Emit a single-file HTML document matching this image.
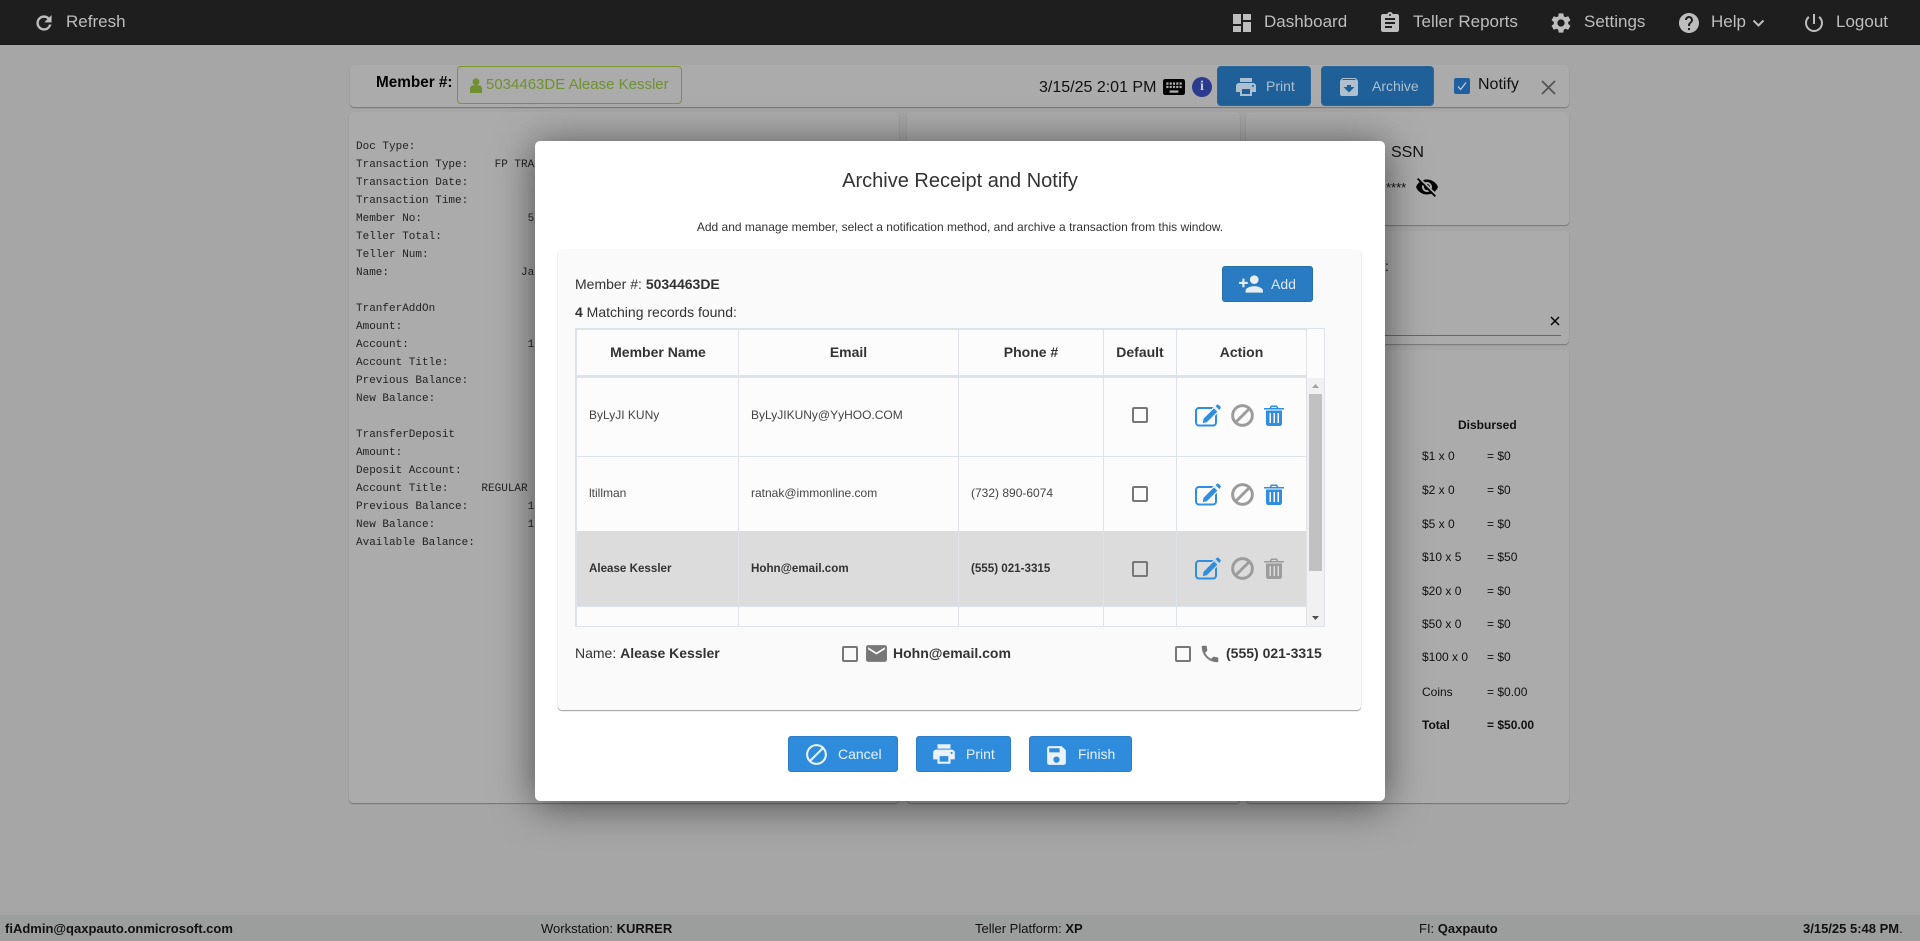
<!DOCTYPE html>
<html>
<head>
<meta charset="utf-8">
<title>Archive Receipt and Notify</title>
<style>
*{box-sizing:border-box}
html,body{margin:0;padding:0;width:1920px;height:941px;overflow:hidden;background:#a6a6a6;font-family:"Liberation Sans",sans-serif;color:#222}
.a{position:absolute}
.t{position:absolute;line-height:20px;height:20px;white-space:pre}
svg{position:absolute;display:block}
.nav{left:0;top:0;width:1920px;height:45px;background:#1e1e1e}
.nt{font-size:17px;color:#bdbdbd;top:12px}
.card{position:absolute;background:#ababab;border-radius:4px;box-shadow:0 1px 1px rgba(0,0,0,.3)}
pre{position:absolute;margin:0;font-family:"Liberation Mono",monospace;font-size:11px;line-height:18px;color:#222}
.hb{position:absolute;background:#1f6098;border-radius:4px;border:1px solid #2a6699;top:66px;height:40px}
.hbt{font-size:14px;color:#aebfd0;top:76px}
.d{font-size:12px;color:#111}
.modal{position:absolute;left:535px;top:141px;width:850px;height:660px;background:#fff;border-radius:5px;box-shadow:0 4px 40px rgba(0,0,0,.55)}
.inner{position:absolute;left:558px;top:249px;width:803px;height:461px;background:#fafafa;border-radius:4px;box-shadow:0 1px 1px rgba(0,0,0,.4)}
.line{position:absolute;background:#e0e2e9}
.th{position:absolute;font-size:14px;font-weight:bold;color:#333;text-align:center;top:342px;line-height:20px;height:20px}
.c{font-size:12px;color:#444}
.sel{font-weight:bold;color:#333;font-size:11.6px}
.cb{position:absolute;width:16px;height:16px;border:2px solid #777;border-radius:2px;background:transparent}
.btn{position:absolute;top:736px;height:36px;background:#2f8bdc;border:1px solid #2a7fc8;border-radius:3px}
.bt{font-size:14px;color:#e9f1f9;top:744px}
.f{font-size:13px;color:#111;top:919px}
b{font-weight:bold}
</style>
</head>
<body>
<!-- nav -->
<div class="a nav"></div>
<svg style="left:33px;top:12px" width="22" height="22" viewBox="0 0 24 24" fill="#bdbdbd" stroke="#bdbdbd" stroke-width=".6"><path d="M17.65 6.35C16.2 4.9 14.21 4 12 4c-4.42 0-7.99 3.58-7.99 8s3.57 8 7.99 8c3.73 0 6.84-2.55 7.73-6h-2.08c-.82 2.33-3.04 4-5.65 4-3.31 0-6-2.69-6-6s2.69-6 6-6c1.66 0 3.14.69 4.22 1.78L13 11h7V4l-2.35 2.35z"/></svg>
<div class="t nt" style="left:66px">Refresh</div>
<svg style="left:1230px;top:11px" width="24" height="24" viewBox="0 0 24 24" fill="#bdbdbd"><path d="M3 13h8V3H3v10zm0 8h8v-6H3v6zm10 0h8V11h-8v10zm0-18v6h8V3h-8z"/></svg>
<div class="t nt" style="left:1264px">Dashboard</div>
<svg style="left:1378px;top:11px" width="24" height="24" viewBox="0 0 24 24" fill="#bdbdbd"><path d="M19 3h-4.18C14.4 1.84 13.3 1 12 1c-1.3 0-2.4.84-2.82 2H5c-1.1 0-2 .9-2 2v14c0 1.1.9 2 2 2h14c1.1 0 2-.9 2-2V5c0-1.1-.9-2-2-2zm-7 0c.55 0 1 .45 1 1s-.45 1-1 1-1-.45-1-1 .45-1 1-1zm2 14H7v-2h7v2zm3-4H7v-2h10v2zm0-4H7V7h10v2z"/></svg>
<div class="t nt" style="left:1413px">Teller Reports</div>
<svg style="left:1549px;top:11px" width="24" height="24" viewBox="0 0 24 24" fill="#bdbdbd"><path d="M19.14 12.94c.04-.3.06-.61.06-.94 0-.32-.02-.64-.07-.94l2.03-1.58c.18-.14.23-.41.12-.61l-1.92-3.32c-.12-.22-.37-.29-.59-.22l-2.39.96c-.5-.38-1.03-.7-1.62-.94l-.36-2.54c-.04-.24-.24-.41-.48-.41h-3.84c-.24 0-.43.17-.47.41l-.36 2.54c-.59.24-1.13.57-1.62.94l-2.39-.96c-.22-.08-.47 0-.59.22L2.74 8.87c-.12.21-.08.47.12.61l2.03 1.58c-.05.3-.09.63-.09.94s.02.64.07.94l-2.03 1.58c-.18.14-.23.41-.12.61l1.92 3.32c.12.22.37.29.59.22l2.39-.96c.5.38 1.03.7 1.62.94l.36 2.54c.05.24.24.41.48.41h3.84c.24 0 .44-.17.47-.41l.36-2.54c.59-.24 1.13-.56 1.62-.94l2.39.96c.22.08.47 0 .59-.22l1.92-3.32c.12-.22.07-.47-.12-.61l-2.01-1.58zM12 15.6c-1.98 0-3.6-1.62-3.6-3.6s1.62-3.6 3.6-3.6 3.6 1.62 3.6 3.6-1.62 3.6-3.6 3.6z"/></svg>
<div class="t nt" style="left:1584px">Settings</div>
<svg style="left:1677px;top:11px" width="24" height="24" viewBox="0 0 24 24" fill="#bdbdbd"><path d="M12 2C6.48 2 2 6.48 2 12s4.48 10 10 10 10-4.48 10-10S17.52 2 12 2zm1 17h-2v-2h2v2zm2.07-7.75l-.9.92C13.45 12.9 13 13.5 13 15h-2v-.5c0-1.1.45-2.1 1.17-2.83l1.24-1.26c.37-.36.59-.86.59-1.41 0-1.1-.9-2-2-2s-2 .9-2 2H8c0-2.21 1.79-4 4-4s4 1.79 4 4c0 .88-.36 1.68-.93 2.25z"/></svg>
<div class="t nt" style="left:1711px">Help</div>
<svg style="left:1752px;top:19px" width="13" height="9" viewBox="0 0 13 9" fill="none" stroke="#bdbdbd" stroke-width="2"><path d="M1.5 1.5l5 5 5-5"/></svg>
<svg style="left:1802px;top:11px" width="24" height="24" viewBox="0 0 24 24" fill="#bdbdbd"><path d="M13 3h-2v10h2V3zm4.83 2.17l-1.42 1.42C17.99 7.86 19 9.81 19 12c0 3.87-3.13 7-7 7s-7-3.13-7-7c0-2.19 1.01-4.14 2.58-5.42L6.17 5.17C4.23 6.82 3 9.26 3 12c0 4.97 4.03 9 9 9s9-4.03 9-9c0-2.74-1.23-5.18-3.17-6.83z"/></svg>
<div class="t nt" style="left:1836px">Logout</div>

<!-- header bar -->
<div class="card" style="left:350px;top:65px;width:1219px;height:42px"></div>
<div class="t" style="left:376px;top:73px;font-size:15.3px;font-weight:bold;color:#000">Member #:</div>
<div class="a" style="left:457px;top:66px;width:225px;height:38px;border:1px solid #79962c;border-radius:4px"></div>
<svg style="left:470px;top:78px" width="12" height="15" viewBox="0 0 12 15" fill="#6f9030"><ellipse cx="6" cy="3.8" rx="3.4" ry="3.6"/><path d="M0 15v-4c0-2.2 1.6-3.6 3-3.6h6c1.4 0 3 1.4 3 3.6v4z"/></svg>
<div class="t" style="left:486px;top:75px;font-size:15px;color:#6f9030">5034463DE Alease Kessler</div>
<div class="t" style="left:1039px;top:78px;font-size:16px;color:#111">3/15/25 2:01 PM</div>
<svg style="left:1163px;top:79px" width="22" height="16" viewBox="2 5 20 14" preserveAspectRatio="none" fill="#000"><path d="M20 5H4c-1.1 0-1.99.9-1.99 2L2 17c0 1.1.9 2 2 2h16c1.1 0 2-.9 2-2V7c0-1.1-.9-2-2-2zm-9 3h2v2h-2V8zm0 3h2v2h-2v-2zM8 8h2v2H8V8zm0 3h2v2H8v-2zm-1 2H5v-2h2v2zm0-3H5V8h2v2zm9 7H8v-2h8v2zm0-4h-2v-2h2v2zm0-3h-2V8h2v2zm3 3h-2v-2h2v2zm0-3h-2V8h2v2z"/></svg>
<div class="a" style="left:1192px;top:77px;width:20px;height:20px;border-radius:50%;background:#2b3a8c;color:#c8cce0;font:bold 14px/20px 'Liberation Serif',serif;text-align:center">i</div>
<div class="hb" style="left:1217px;width:94px"></div>
<svg style="left:1234px;top:75px" width="24" height="24" viewBox="0 0 24 24" fill="#aebfd0"><path d="M19 8H5c-1.66 0-3 1.34-3 3v6h4v4h12v-4h4v-6c0-1.66-1.34-3-3-3zm-3 11H8v-5h8v5zm3-7c-.55 0-1-.45-1-1s.45-1 1-1 1 .45 1 1-.45 1-1 1zm-1-9H6v4h12V3z"/></svg>
<div class="t hbt" style="left:1266px">Print</div>
<div class="hb" style="left:1321px;width:113px"></div>
<svg style="left:1337px;top:75px" width="24" height="24" viewBox="0 0 24 24" fill="#aebfd0"><path d="M20.54 5.23l-1.39-1.68C18.88 3.21 18.47 3 18 3H6c-.47 0-.88.21-1.16.55L3.46 5.23C3.17 5.57 3 6.02 3 6.5V19c0 1.1.9 2 2 2h14c1.1 0 2-.9 2-2V6.5c0-.48-.17-.93-.46-1.27zM12 17.5L6.5 12H10v-2h4v2h3.5L12 17.5zM5.12 5l.81-1h12l.94 1H5.12z"/></svg>
<div class="t hbt" style="left:1372px">Archive</div>
<div class="a" style="left:1454px;top:78px;width:16px;height:16px;background:#2060a0;border-radius:2px"></div>
<svg style="left:1454px;top:78px" width="16" height="16" viewBox="0 0 16 16" fill="none" stroke="#bcd" stroke-width="1.3"><path d="M4 8.5l2.6 3L12 4.5"/></svg>
<div class="t" style="left:1478px;top:75px;font-size:16px;color:#111">Notify</div>
<svg style="left:1541px;top:80px" width="15" height="15" viewBox="0 0 15 15" fill="none" stroke="#555" stroke-width="1.8"><path d="M1 1l13 13M14 1L1 14"/></svg>

<!-- cards -->
<div class="card" style="left:349px;top:112px;width:550px;height:691px"></div>
<div class="card" style="left:907px;top:112px;width:333px;height:691px"></div>
<div class="card" style="left:1246px;top:112px;width:323px;height:113px"></div>
<div class="card" style="left:1246px;top:231px;width:323px;height:113px"></div>
<div class="card" style="left:1246px;top:350px;width:323px;height:453px"></div>

<pre style="left:356px;top:138px">Doc Type:
Transaction Type:    FP TRA
Transaction Date:
Transaction Time:
Member No:                5
Teller Total:
Teller Num:
Name:                    Ja

TranferAddOn
Amount:
Account:                  1
Account Title:
Previous Balance:
New Balance:

TransferDeposit
Amount:
Deposit Account:
Account Title:     REGULAR
Previous Balance:         1
New Balance:              1
Available Balance:</pre>

<div class="t" style="left:1391px;top:143px;font-size:16px;color:#111">SSN</div>
<div class="t" style="left:1386px;top:178px;font-size:13px;color:#111">****</div>
<svg style="left:1415px;top:174px" width="24" height="26" viewBox="0 0 24 24" fill="#000"><path d="M12 7c2.76 0 5 2.24 5 5 0 .65-.13 1.26-.36 1.83l2.92 2.92c1.51-1.26 2.7-2.89 3.43-4.75-1.73-4.39-6-7.5-11-7.5-1.4 0-2.74.25-3.98.7l2.16 2.16C10.74 7.13 11.35 7 12 7zM2 4.27l2.28 2.28.46.46C3.08 8.3 1.78 10.02 1 12c1.73 4.39 6 7.5 11 7.5 1.55 0 3.03-.3 4.38-.84l.42.42L19.73 22 21 20.73 3.27 3 2 4.27zM7.53 9.8l1.55 1.55c-.05.21-.08.43-.08.65 0 1.66 1.34 3 3 3 .22 0 .44-.03.65-.08l1.55 1.55c-.67.33-1.41.53-2.2.53-2.76 0-5-2.24-5-5 0-.79.2-1.53.53-2.2zm4.31-.78l3.15 3.15.02-.16c0-1.66-1.34-3-3-3l-.17.01z"/></svg>
<div class="t" style="left:1385px;top:256px;font-size:14px;color:#111">:</div>
<svg style="left:1550px;top:316px" width="10" height="10" viewBox="0 0 10 10" fill="none" stroke="#000" stroke-width="1.4"><path d="M1 1l8 8M9 1L1 9"/></svg>
<div class="a" style="left:1385px;top:335px;width:176px;height:1px;background:#666"></div>

<div class="t d" style="left:1458px;top:415px;font-weight:bold">Disbursed</div>
<div class="t d" style="left:1422px;top:446px">$1 x 0</div><div class="t d" style="left:1487px;top:446px">= $0</div>
<div class="t d" style="left:1422px;top:480px">$2 x 0</div><div class="t d" style="left:1487px;top:480px">= $0</div>
<div class="t d" style="left:1422px;top:514px">$5 x 0</div><div class="t d" style="left:1487px;top:514px">= $0</div>
<div class="t d" style="left:1422px;top:547px">$10 x 5</div><div class="t d" style="left:1487px;top:547px">= $50</div>
<div class="t d" style="left:1422px;top:581px">$20 x 0</div><div class="t d" style="left:1487px;top:581px">= $0</div>
<div class="t d" style="left:1422px;top:614px">$50 x 0</div><div class="t d" style="left:1487px;top:614px">= $0</div>
<div class="t d" style="left:1422px;top:647px">$100 x 0</div><div class="t d" style="left:1487px;top:647px">= $0</div>
<div class="t d" style="left:1422px;top:682px">Coins</div><div class="t d" style="left:1487px;top:682px">= $0.00</div>
<div class="t d" style="left:1422px;top:715px;font-weight:bold">Total</div><div class="t d" style="left:1487px;top:715px;font-weight:bold">= $50.00</div>

<!-- footer -->
<div class="a" style="left:0;top:915px;width:1920px;height:26px;background:#9c9d9d"></div>
<div class="t f" style="left:5px"><b>fiAdmin@qaxpauto.onmicrosoft.com</b></div>
<div class="t f" style="left:541px">Workstation: <b>KURRER</b></div>
<div class="t f" style="left:975px">Teller Platform: <b>XP</b></div>
<div class="t f" style="left:1419px">FI: <b>Qaxpauto</b></div>
<div class="t f" style="left:1803px"><b>3/15/25 5:48 PM</b>.</div>

<!-- modal -->
<div class="modal"></div>
<div class="t" style="left:535px;width:850px;top:171px;font-size:20px;line-height:20px;text-align:center;color:#333">Archive Receipt and Notify</div>
<div class="t" style="left:535px;width:850px;top:217px;font-size:12px;text-align:center;color:#333">Add and manage member, select a notification method, and archive a transaction from this window.</div>

<div class="inner"></div>
<div class="t" style="left:575px;top:274px;font-size:14px;color:#333">Member #: <b>5034463DE</b></div>
<div class="a" style="left:1222px;top:266px;width:91px;height:36px;background:#2a7cc2;border:1px solid #2670b0;border-radius:3px"></div>
<svg style="left:1238px;top:271px" width="26" height="26" viewBox="0 0 24 24" fill="#e6edf3"><path d="M15 12c2.21 0 4-1.79 4-4s-1.79-4-4-4-4 1.79-4 4 1.79 4 4 4zm-9-2V7H4v3H1v2h3v3h2v-3h3v-2H6zm9 4c-2.67 0-8 1.34-8 4v2h16v-2c0-2.66-5.33-4-8-4z"/></svg>
<div class="t" style="left:1271px;top:274px;font-size:14px;color:#dfe9f2">Add</div>
<div class="t" style="left:575px;top:302px;font-size:14px;color:#333"><b>4</b> Matching records found:</div>

<!-- table -->
<div class="a" style="left:575px;top:328px;width:750px;height:299px;background:#fcfcfd;border:1px solid #e0e2e9"></div>
<div class="a" style="left:577px;top:531px;width:729px;height:76px;background:#dcdcdc"></div>
<div class="line" style="left:575px;top:328px;width:731px;height:2px"></div>
<div class="line" style="left:575px;top:375px;width:731px;height:3px"></div>
<div class="line" style="left:575px;top:328px;width:2px;height:299px"></div>
<div class="line" style="left:577px;top:456px;width:729px;height:1px"></div>
<div class="line" style="left:577px;top:606px;width:729px;height:1px"></div>
<div class="line" style="left:738px;top:329px;width:1px;height:298px"></div>
<div class="line" style="left:958px;top:329px;width:1px;height:298px"></div>
<div class="line" style="left:1103px;top:329px;width:1px;height:298px"></div>
<div class="line" style="left:1176px;top:329px;width:1px;height:298px"></div>
<div class="line" style="left:1306px;top:329px;width:1px;height:298px"></div>
<div class="a" style="left:1307px;top:378px;width:17px;height:248px;background:#f1f1f1"></div>
<div class="a" style="left:1309px;top:394px;width:13px;height:177px;background:#c1c1c1"></div>
<svg style="left:1311px;top:383px" width="9" height="6" viewBox="0 0 9 6" fill="#a3a3a3"><path d="M4.5 1L8 5H1z"/></svg>
<svg style="left:1311px;top:615px" width="9" height="6" viewBox="0 0 9 6" fill="#505050"><path d="M1 1h7L4.5 5z"/></svg>

<div class="th" style="left:578px;width:160px">Member Name</div>
<div class="th" style="left:739px;width:219px">Email</div>
<div class="th" style="left:959px;width:144px">Phone #</div>
<div class="th" style="left:1104px;width:72px">Default</div>
<div class="th" style="left:1177px;width:129px">Action</div>

<div class="t c" style="left:589px;top:405px">ByLyJI KUNy</div>
<div class="t c" style="left:751px;top:405px">ByLyJIKUNy@YyHOO.COM</div>
<div class="t c" style="left:589px;top:483px">ltillman</div>
<div class="t c" style="left:751px;top:483px">ratnak@immonline.com</div>
<div class="t c" style="left:971px;top:483px">(732) 890-6074</div>
<div class="t c sel" style="left:589px;top:559px">Alease Kessler</div>
<div class="t c sel" style="left:751px;top:559px">Hohn@email.com</div>
<div class="t c sel" style="left:971px;top:559px">(555) 021-3315</div>

<div class="cb" style="left:1132px;top:407px"></div>
<div class="cb" style="left:1132px;top:486px"></div>
<div class="cb" style="left:1132px;top:561px"></div>

<!-- row 1 icons -->
<svg style="left:1194px;top:404px" width="28" height="23" viewBox="0 0 28 23"><rect x="2" y="4" width="20" height="17.5" rx="3" fill="none" stroke="#308ee0" stroke-width="2"/><path d="M9 14.5L20 3.5l4.2 4.2-11 11L8 20z" fill="#308ee0" stroke="#fcfcfd" stroke-width="1.2"/><path d="M21.5 2l1.5-1.2c.6-.4 1-.4 1.5 0l2 2c.5.5.5 1 0 1.5L25.3 6z" fill="#308ee0"/></svg>
<svg style="left:1231px;top:404px" width="23" height="23" viewBox="1.5 1.5 21 21" fill="#9c9c9c" stroke="#9c9c9c" stroke-width=".7"><path d="M12 2C6.48 2 2 6.48 2 12s4.48 10 10 10 10-4.48 10-10S17.52 2 12 2zM4 12c0-4.42 3.58-8 8-8 1.85 0 3.55.63 4.9 1.69L5.69 16.9C4.63 15.55 4 13.85 4 12zm8 8c-1.85 0-3.55-.63-4.9-1.69L18.31 7.1C19.37 8.45 20 10.15 20 12c0 4.42-3.58 8-8 8z"/></svg>
<svg style="left:1264px;top:405px" width="20" height="21" viewBox="0 0 20 21" fill="#308ee0"><path d="M0 3h5.500L7 .5h6L14.500 3H20v1.500H0zM8 2l-.7 1h5.400L12 2z"/><path d="M2 5.500h16V18.500c0 1.500-1 2.500-2.500 2.500h-11C3 21 2 20 2 18.500zM5.500 8v10h1.500V8zm4 0v10h1.500V8zm4 0v10h1.500V8z" fill-rule="evenodd"/></svg>
<!-- row 2 icons -->
<svg style="left:1194px;top:483px" width="28" height="23" viewBox="0 0 28 23"><rect x="2" y="4" width="20" height="17.5" rx="3" fill="none" stroke="#308ee0" stroke-width="2"/><path d="M9 14.5L20 3.500l4.200 4.200-11 11L8 20z" fill="#308ee0" stroke="#fcfcfd" stroke-width="1.200"/><path d="M21.500 2l1.500-1.200c.6-.4 1-.4 1.500 0l2 2c.5.5.5 1 0 1.500L25.300 6z" fill="#308ee0"/></svg>
<svg style="left:1231px;top:483px" width="23" height="23" viewBox="1.5 1.5 21 21" fill="#9c9c9c" stroke="#9c9c9c" stroke-width=".7"><path d="M12 2C6.48 2 2 6.48 2 12s4.48 10 10 10 10-4.48 10-10S17.52 2 12 2zM4 12c0-4.42 3.58-8 8-8 1.85 0 3.55.63 4.9 1.69L5.69 16.9C4.63 15.55 4 13.85 4 12zm8 8c-1.85 0-3.55-.63-4.9-1.69L18.31 7.1C19.37 8.45 20 10.15 20 12c0 4.42-3.58 8-8 8z"/></svg>
<svg style="left:1264px;top:484px" width="20" height="21" viewBox="0 0 20 21" fill="#308ee0"><path d="M0 3h5.500L7 .5h6L14.500 3H20v1.500H0zM8 2l-.7 1h5.400L12 2z"/><path d="M2 5.500h16V18.500c0 1.500-1 2.500-2.500 2.500h-11C3 21 2 20 2 18.500zM5.500 8v10h1.500V8zm4 0v10h1.500V8zm4 0v10h1.500V8z" fill-rule="evenodd"/></svg>
<!-- row 3 icons -->
<svg style="left:1194px;top:557px" width="28" height="23" viewBox="0 0 28 23"><rect x="2" y="4" width="20" height="17.5" rx="3" fill="none" stroke="#308ee0" stroke-width="2"/><path d="M9 14.5L20 3.500l4.200 4.200-11 11L8 20z" fill="#308ee0" stroke="#dcdcdc" stroke-width="1.200"/><path d="M21.500 2l1.500-1.200c.6-.4 1-.4 1.500 0l2 2c.5.5.5 1 0 1.500L25.300 6z" fill="#308ee0"/></svg>
<svg style="left:1231px;top:557px" width="23" height="23" viewBox="1.5 1.5 21 21" fill="#9c9c9c" stroke="#9c9c9c" stroke-width=".7"><path d="M12 2C6.48 2 2 6.48 2 12s4.48 10 10 10 10-4.48 10-10S17.52 2 12 2zM4 12c0-4.42 3.58-8 8-8 1.85 0 3.55.63 4.9 1.69L5.69 16.9C4.63 15.55 4 13.85 4 12zm8 8c-1.85 0-3.55-.63-4.9-1.69L18.31 7.1C19.37 8.45 20 10.15 20 12c0 4.42-3.58 8-8 8z"/></svg>
<svg style="left:1264px;top:558px" width="20" height="21" viewBox="0 0 20 21" fill="#9c9c9c"><path d="M0 3h5.500L7 .5h6L14.500 3H20v1.500H0zM8 2l-.7 1h5.400L12 2z"/><path d="M2 5.500h16V18.500c0 1.500-1 2.500-2.500 2.500h-11C3 21 2 20 2 18.500zM5.500 8v10h1.500V8zm4 0v10h1.500V8zm4 0v10h1.500V8z" fill-rule="evenodd"/></svg>

<!-- name row -->
<div class="t" style="left:575px;top:643px;font-size:14px;color:#333">Name: <b>Alease Kessler</b></div>
<div class="cb" style="left:842px;top:646px"></div>
<svg style="left:865px;top:642px" width="23" height="23" viewBox="1 1 22 22" fill="#777"><path d="M20 4H4c-1.100 0-1.990.9-1.990 2L2 18c0 1.100.9 2 2 2h16c1.100 0 2-.9 2-2V6c0-1.100-.9-2-2-2zm0 4l-8 5-8-5V6l8 5 8-5v2z"/></svg>
<div class="t" style="left:893px;top:643px;font-size:14px;font-weight:bold;color:#333">Hohn@email.com</div>
<div class="cb" style="left:1175px;top:646px"></div>
<svg style="left:1199px;top:643px" width="22" height="22" viewBox="0 0 24 24" fill="#777"><path d="M6.620 10.790c1.440 2.830 3.760 5.140 6.590 6.590l2.200-2.200c.27-.27.67-.36 1.020-.24 1.120.37 2.330.57 3.570.57.55 0 1 .45 1 1V20c0 .55-.45 1-1 1-9.390 0-17-7.610-17-17 0-.55.45-1 1-1h3.500c.55 0 1 .45 1 1 0 1.250.2 2.450.57 3.570.11.35.03.74-.25 1.020l-2.200 2.200z"/></svg>
<div class="t" style="left:1226px;top:643px;font-size:14px;font-weight:bold;color:#333">(555) 021-3315</div>

<!-- modal buttons -->
<div class="btn" style="left:788px;width:110px"></div>
<svg style="left:804px;top:742px" width="25" height="25" viewBox="0 0 24 24" fill="#e9f1f9"><path d="M12 2C6.480 2 2 6.480 2 12s4.480 10 10 10 10-4.480 10-10S17.520 2 12 2zM4 12c0-4.420 3.580-8 8-8 1.850 0 3.550.63 4.900 1.690L5.690 16.900C4.630 15.550 4 13.850 4 12zm8 8c-1.850 0-3.550-.63-4.900-1.690L18.310 7.100C19.370 8.450 20 10.150 20 12c0 4.420-3.580 8-8 8z"/></svg>
<div class="t bt" style="left:838px">Cancel</div>
<div class="btn" style="left:916px;width:95px"></div>
<svg style="left:931px;top:741px" width="26" height="26" viewBox="0 0 24 24" fill="#e9f1f9"><path d="M19 8H5c-1.660 0-3 1.340-3 3v6h4v4h12v-4h4v-6c0-1.660-1.340-3-3-3zm-3 11H8v-5h8v5zm3-7c-.55 0-1-.45-1-1s.45-1 1-1 1 .45 1 1-.45 1-1 1zm-1-9H6v4h12V3z"/></svg>
<div class="t bt" style="left:966px">Print</div>
<div class="btn" style="left:1029px;width:103px"></div>
<svg style="left:1044px;top:743px" width="25" height="25" viewBox="0 0 24 24" fill="#e9f1f9"><path d="M17 3H5c-1.110 0-2 .9-2 2v14c0 1.100.89 2 2 2h14c1.100 0 2-.9 2-2V7l-4-4zm-5 16c-1.660 0-3-1.340-3-3s1.340-3 3-3 3 1.340 3 3-1.340 3-3 3zm3-10H5V5h10v4z"/></svg>
<div class="t bt" style="left:1078px">Finish</div>
</body>
</html>
